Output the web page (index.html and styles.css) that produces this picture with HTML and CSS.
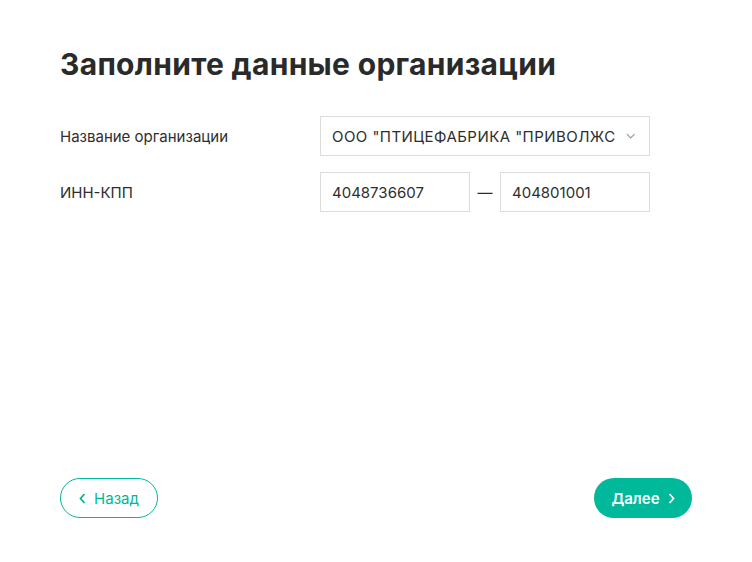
FILE: index.html
```html
<!DOCTYPE html>
<html lang="ru">
<head>
<meta charset="utf-8">
<link rel="stylesheet" href="styles.css">
</head>
<body>
<div class="page">
  <h1 class="title">Заполните данные организации</h1>
  <div class="form">
    <div class="row">
      <div class="label">Название организации</div>
      <div class="select">
        <span class="select-text">ООО "ПТИЦЕФАБРИКА "ПРИВОЛЖС</span>
        <svg class="chev-down" width="10" height="6" viewBox="0 0 10 6"><path d="M1 1l4 4 4-4" fill="none" stroke="#9a9a9a" stroke-width="1.2"/></svg>
      </div>
    </div>
    <div class="row">
      <div class="label">ИНН-КПП</div>
      <div class="pair">
        <div class="input">4048736607</div>
        <span class="dash">—</span>
        <div class="input">404801001</div>
      </div>
    </div>
  </div>
  <div class="actions">
    <button class="btn btn-outline"><svg width="7" height="11" viewBox="0 0 7 11"><path d="M5.5 1L1.5 5.5l4 4.5" fill="none" stroke="#00b89a" stroke-width="1.8"/></svg>Назад</button>
    <button class="btn btn-fill">Далее<svg width="7" height="11" viewBox="0 0 7 11"><path d="M1.5 1l4 4.5-4 4.5" fill="none" stroke="#fff" stroke-width="1.8"/></svg></button>
  </div>
</div>
</body>
</html>
```
FILE: styles.css
```css
* { box-sizing: border-box; }
html, body { margin: 0; background: #fff; }
body { font-family: Inter, "Noto Sans", sans-serif; color: #2e2e2e; }
.page {
  width: 752px; height: 562px;
  padding: 42px 60px 44px 60px;
  display: flex; flex-direction: column;
}
.title {
  margin: 0;
  font-size: 30px; font-weight: 700; line-height: 44px;
  color: #2a2a2a; letter-spacing: 0.3px;
}
.form { margin-top: 30px; display: flex; flex-direction: column; gap: 16px; }
.row { display: flex; align-items: center; }
.label { width: 260px; font-size: 15px; color: #2e2e2e; }
.select {
  width: 330px; height: 40px; border: 1px solid #dcdcdc;
  display: flex; align-items: center; padding: 0 14px 0 11px; gap: 10px;
  font-size: 15px; color: #2e2e2e;
}
.select-text { flex: 1; white-space: nowrap; letter-spacing: 0.45px; }
.pair { display: flex; align-items: center; }
.input {
  width: 150px; height: 40px; border: 1px solid #dcdcdc;
  display: flex; align-items: center; padding: 0 11px;
  font-size: 15px; color: #2e2e2e;
}
.dash { width: 30px; text-align: center; font-size: 15px; color: #2e2e2e; }
.actions { margin-top: auto; display: flex; justify-content: space-between; }
.btn {
  height: 40px; width: 98px; border-radius: 20px;
  font-family: inherit; font-size: 15px;
  display: flex; align-items: center; justify-content: center; gap: 8px;
  cursor: pointer;
}
.btn-outline { background: #fff; border: 1px solid #00b89a; color: #00b89a; }
.btn-fill { background: #00b89a; border: none; color: #fff; font-weight: 600; }
```
